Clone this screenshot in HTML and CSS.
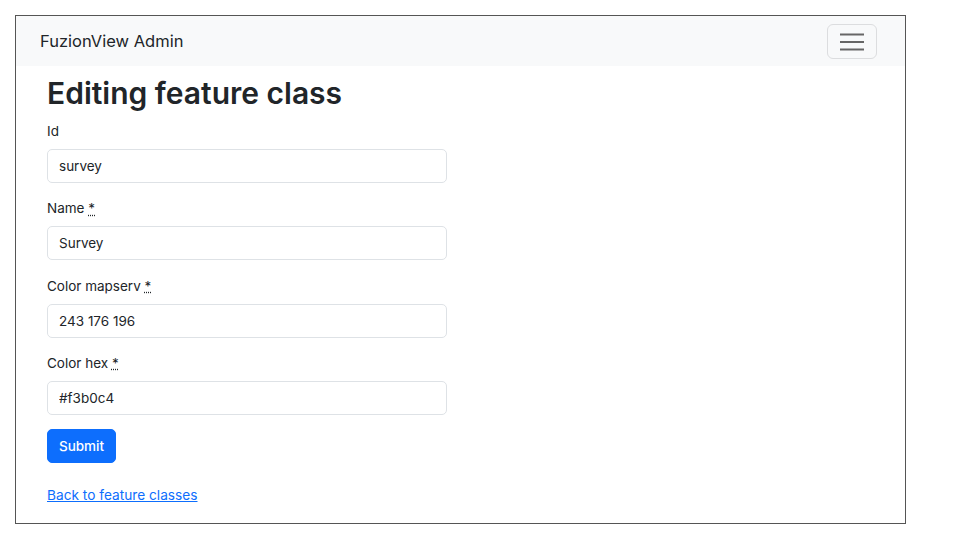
FILE: index.html
```html
<!DOCTYPE html>
<html lang="en">
<head>
<meta charset="utf-8">
<title>FuzionView Admin</title>
<link rel="stylesheet" href="styles.css">
</head>
<body>
<div class="frame">
  <nav class="navbar">
    <a class="brand" href="#">FuzionView Admin</a>
    <button class="toggler" type="button" aria-label="Toggle navigation">
      <svg width="24" height="18" viewBox="0 0 24 18" aria-hidden="true">
        <path d="M0 1.5h24M0 9h24M0 16.5h24" stroke="#666" stroke-width="2" fill="none"/>
      </svg>
    </button>
  </nav>
  <main class="main">
    <h1 class="title">Editing feature class</h1>
    <form class="form">
      <div class="group">
        <label class="label" for="id">Id</label>
        <input class="input" id="id" type="text" value="survey">
      </div>
      <div class="group">
        <label class="label" for="name">Name <abbr title="required">*</abbr></label>
        <input class="input" id="name" type="text" value="Survey">
      </div>
      <div class="group">
        <label class="label" for="mapserv">Color mapserv <abbr title="required">*</abbr></label>
        <input class="input" id="mapserv" type="text" value="243 176 196">
      </div>
      <div class="group">
        <label class="label" for="hex">Color hex <abbr title="required">*</abbr></label>
        <input class="input" id="hex" type="text" value="#f3b0c4">
      </div>
      <button class="submit" type="submit">Submit</button>
    </form>
    <a class="back" href="#">Back to feature classes</a>
  </main>
</div>
</body>
</html>
```

FILE: styles.css
```css
html, body {
  margin: 0;
  padding: 0;
  background: #ffffff;
}

body {
  font-family: Inter, "Liberation Sans", Arial, sans-serif;
  color: #212529;
}

.frame {
  margin: 15px;
  width: 889px;
  height: 507px;
  border: 1px solid #555;
  background: #fff;
  overflow: hidden;
}

.navbar {
  height: 50px;
  background: #f8f9fa;
  display: flex;
  align-items: center;
  justify-content: space-between;
  padding: 0 28px 0 24px;
}

.brand {
  font-size: 16.5px;
  color: #212529;
  text-decoration: none;
}

.toggler {
  width: 50px;
  height: 35px;
  margin-top: 1px;
  border: 1px solid #dcdddf;
  border-radius: 6px;
  background: transparent;
  display: flex;
  align-items: center;
  justify-content: center;
  padding: 0;
}

.main {
  padding: 0 31px;
}

.title {
  font-size: 30px;
  font-weight: 600;
  line-height: 35px;
  margin: 10px 0 10px;
  letter-spacing: 0;
}

.form {
  margin: 0;
}

.group {
  margin-bottom: 15.33px;
}

.label {
  display: block;
  font-size: 13.5px;
  line-height: 21px;
  margin-bottom: 7px;
}

.label abbr {
  text-decoration: underline dotted;
  cursor: help;
}

.input {
  display: block;
  box-sizing: border-box;
  width: 400px;
  height: 34px;
  padding: 0 11px;
  border: 1px solid #dee2e6;
  border-radius: 5px;
  font-family: inherit;
  font-size: 13.5px;
  color: #212529;
  background: #fff;
  margin: 0;
}

.submit {
  display: block;
  height: 34px;
  width: 69px;
  margin-top: -1px;
  padding: 0;
  border: 1px solid #0d6efd;
  border-radius: 5px;
  background: #0d6efd;
  color: #fff;
  font-family: inherit;
  font-size: 13.5px;
  font-weight: 500;
}

.back {
  display: inline-block;
  margin-top: 22px;
  font-size: 13.7px;
  line-height: 21px;
  color: #0d6efd;
  text-decoration: underline;
}
```
